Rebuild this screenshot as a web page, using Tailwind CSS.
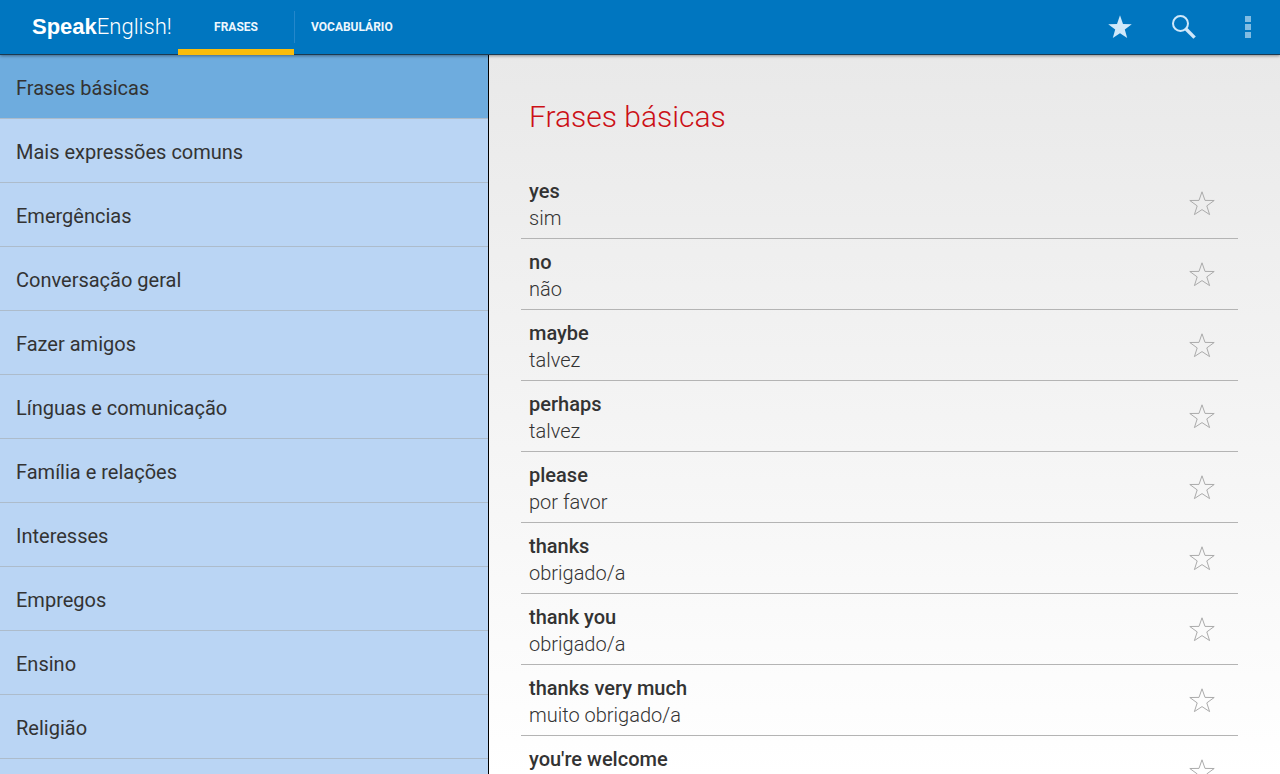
<!DOCTYPE html>
<html lang="pt">
<head>
<meta charset="utf-8">
<meta name="viewport" content="width=device-width, initial-scale=1">
<title>SpeakEnglish!</title>
<script src="https://cdn.jsdelivr.net/npm/@tailwindcss/browser@4"></script>
</head>
<body class="flex h-screen flex-col overflow-hidden font-['Roboto',sans-serif] text-[#333]">
<svg class="hidden" aria-hidden="true">
  <symbol id="star" viewBox="0 0 28 26"><path d="M14 1.8 L17 10.4 L26.2 10.5 L18.8 15.9 L21.6 24.6 L14 19.6 L6.4 24.6 L9.2 15.9 L1.8 10.5 L11 10.4 Z"/></symbol>
</svg>

<header class="relative z-10 flex h-[55px] shrink-0 border-b border-[#1b3a52] bg-[#0076c0] shadow-[0_1px_3px_rgba(0,0,0,0.4)]">
  <a href="#" class="flex w-[178px] items-center pl-8 text-[22px] leading-none text-white"><span class="font-['Liberation_Sans',sans-serif] font-bold">Speak</span><span class="font-light">English!</span></a>
  <nav class="flex items-stretch text-xs font-bold text-[#eef7fd]">
    <button class="-mb-px w-[116px] border-b-6 border-[#f9bc0b] pt-1">FRASES</button>
    <span class="my-[11px] w-px bg-[#2487cb]"></span>
    <button class="px-4">VOCABULÁRIO</button>
  </nav>
  <div class="ml-auto flex">
    <button class="flex w-16 items-center justify-center" aria-label="Favoritos">
      <svg class="size-6" viewBox="0 0 24 24" fill="#cfe8fa"><path d="M12 0.3 L15 8.9 L23.8 9.2 L16.8 14.6 L19.2 23 L12 18.2 L4.8 23 L7.2 14.6 L0.2 9.2 L9 8.9 Z"/></svg>
    </button>
    <button class="flex w-16 items-center justify-center" aria-label="Pesquisar">
      <svg class="size-6" viewBox="0 0 24 24" fill="none" stroke="#cfe8fa"><circle cx="8.5" cy="8.5" r="7.5" stroke-width="2"/><path d="M14 14 L22.6 22.6" stroke-width="3.4"/></svg>
    </button>
    <button class="flex w-16 items-center justify-center" aria-label="Mais opções">
      <svg class="size-6" viewBox="0 0 24 24" fill="#81bce2"><path d="M9 1h6v6H9zM9 9h6v6H9zM9 17h6v6H9z"/></svg>
    </button>
  </div>
</header>

<div class="flex min-h-0 flex-1">
  <nav class="w-[489px] shrink-0 overflow-hidden border-r border-black bg-[#bad5f4] text-xl" aria-label="Categorias">
    <a href="#" class="flex h-16 items-center border-b border-[#adbccb] bg-[#6eacde] px-4 pt-0.5">Frases básicas</a>
    <a href="#" class="flex h-16 items-center border-b border-[#adbccb] px-4 pt-0.5">Mais expressões comuns</a>
    <a href="#" class="flex h-16 items-center border-b border-[#adbccb] px-4 pt-0.5">Emergências</a>
    <a href="#" class="flex h-16 items-center border-b border-[#adbccb] px-4 pt-0.5">Conversação geral</a>
    <a href="#" class="flex h-16 items-center border-b border-[#adbccb] px-4 pt-0.5">Fazer amigos</a>
    <a href="#" class="flex h-16 items-center border-b border-[#adbccb] px-4 pt-0.5">Línguas e comunicação</a>
    <a href="#" class="flex h-16 items-center border-b border-[#adbccb] px-4 pt-0.5">Família e relações</a>
    <a href="#" class="flex h-16 items-center border-b border-[#adbccb] px-4 pt-0.5">Interesses</a>
    <a href="#" class="flex h-16 items-center border-b border-[#adbccb] px-4 pt-0.5">Empregos</a>
    <a href="#" class="flex h-16 items-center border-b border-[#adbccb] px-4 pt-0.5">Ensino</a>
    <a href="#" class="flex h-16 items-center border-b border-[#adbccb] px-4 pt-0.5">Religião</a>
  </nav>

  <main class="min-w-0 flex-1 overflow-hidden bg-linear-to-b from-[#e9e9e9] to-white pr-[42px] pl-8">
    <h1 class="px-2 pt-[41px] pb-[31px] text-3xl/[41px] font-light text-[#cc1016]">Frases básicas</h1>
    <ul class="text-xl/[27px]">
      <li class="flex items-center justify-between border-b border-[#b4b4b4] pt-2.5 pr-[22px] pb-1.5 pl-2">
        <div><p class="font-medium">yes</p><p class="font-light">sim</p></div>
        <button class="mb-1" aria-label="Favorito: yes"><svg class="h-[26px] w-7" fill="none" stroke="#ababab"><use href="#star"/></svg></button>
      </li>
      <li class="flex items-center justify-between border-b border-[#b4b4b4] pt-2.5 pr-[22px] pb-1.5 pl-2">
        <div><p class="font-medium">no</p><p class="font-light">não</p></div>
        <button class="mb-1" aria-label="Favorito: no"><svg class="h-[26px] w-7" fill="none" stroke="#ababab"><use href="#star"/></svg></button>
      </li>
      <li class="flex items-center justify-between border-b border-[#b4b4b4] pt-2.5 pr-[22px] pb-1.5 pl-2">
        <div><p class="font-medium">maybe</p><p class="font-light">talvez</p></div>
        <button class="mb-1" aria-label="Favorito: maybe"><svg class="h-[26px] w-7" fill="none" stroke="#ababab"><use href="#star"/></svg></button>
      </li>
      <li class="flex items-center justify-between border-b border-[#b4b4b4] pt-2.5 pr-[22px] pb-1.5 pl-2">
        <div><p class="font-medium">perhaps</p><p class="font-light">talvez</p></div>
        <button class="mb-1" aria-label="Favorito: perhaps"><svg class="h-[26px] w-7" fill="none" stroke="#ababab"><use href="#star"/></svg></button>
      </li>
      <li class="flex items-center justify-between border-b border-[#b4b4b4] pt-2.5 pr-[22px] pb-1.5 pl-2">
        <div><p class="font-medium">please</p><p class="font-light">por favor</p></div>
        <button class="mb-1" aria-label="Favorito: please"><svg class="h-[26px] w-7" fill="none" stroke="#ababab"><use href="#star"/></svg></button>
      </li>
      <li class="flex items-center justify-between border-b border-[#b4b4b4] pt-2.5 pr-[22px] pb-1.5 pl-2">
        <div><p class="font-medium">thanks</p><p class="font-light">obrigado/a</p></div>
        <button class="mb-1" aria-label="Favorito: thanks"><svg class="h-[26px] w-7" fill="none" stroke="#ababab"><use href="#star"/></svg></button>
      </li>
      <li class="flex items-center justify-between border-b border-[#b4b4b4] pt-2.5 pr-[22px] pb-1.5 pl-2">
        <div><p class="font-medium">thank you</p><p class="font-light">obrigado/a</p></div>
        <button class="mb-1" aria-label="Favorito: thank you"><svg class="h-[26px] w-7" fill="none" stroke="#ababab"><use href="#star"/></svg></button>
      </li>
      <li class="flex items-center justify-between border-b border-[#b4b4b4] pt-2.5 pr-[22px] pb-1.5 pl-2">
        <div><p class="font-medium">thanks very much</p><p class="font-light">muito obrigado/a</p></div>
        <button class="mb-1" aria-label="Favorito: thanks very much"><svg class="h-[26px] w-7" fill="none" stroke="#ababab"><use href="#star"/></svg></button>
      </li>
      <li class="flex items-center justify-between border-b border-[#b4b4b4] pt-2.5 pr-[22px] pb-1.5 pl-2">
        <div class="min-h-[54px]"><p class="font-medium">you're welcome</p></div>
        <button class="mb-1" aria-label="Favorito: you're welcome"><svg class="h-[26px] w-7" fill="none" stroke="#ababab"><use href="#star"/></svg></button>
      </li>
    </ul>
  </main>
</div>
</body>
</html>
